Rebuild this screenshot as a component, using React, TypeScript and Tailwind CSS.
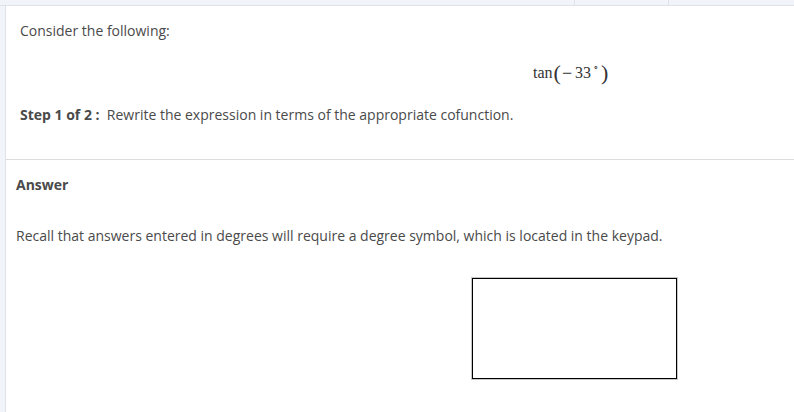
import * as React from "react";

export default function App() {
  return (
    <div className="flex h-[412px] w-[794px] flex-col overflow-hidden bg-white font-['Open_Sans',sans-serif] text-[#4a4a4a]">
      {/* top tab strip */}
      <div className="flex h-[6px] shrink-0 border-b border-[#dfe3e8] bg-[#f1f4f8]">
        <div className="w-[575px] border-r border-[#dfe3e8]" />
        <div className="w-[94px] border-r border-[#dfe3e8]" />
        <div className="flex-1" />
      </div>

      <div className="flex flex-1">
        {/* left gutter */}
        <div className="w-[6px] shrink-0 border-r border-[#dfe3e8] bg-[#f1f4f8]" />

        <div className="flex flex-1 flex-col">
          {/* question */}
          <div className="h-[154px] border-b border-[#dcdcdc] pl-[14px]">
            <p className="pt-[15px] text-[14px] leading-[20px]">Consider the following:</p>
            <div className="mt-[22px] flex h-[20px] items-center pl-[513px] font-['Liberation_Serif',serif] text-[16px] leading-[20px] text-[#333]">
              <span>tan</span>
              <span className="ml-[1px] text-[22px] font-light leading-[20px]">(</span>
              <span className="ml-[1px] text-[18px]">−</span>
              <span className="ml-[3px]">33</span>
              <span className="ml-[2px] -mt-[10px] text-[9px] leading-none">∘</span>
              <span className="ml-[2px] text-[22px] font-light leading-[20px]">)</span>
            </div>
            <p className="mt-[22px] text-[14px] leading-[20px]">
              <span className="font-bold">Step 1 of 2 :</span>&nbsp; Rewrite the expression in terms of the appropriate cofunction.
            </p>
          </div>

          {/* answer */}
          <div className="pl-[10px]">
            <p className="pt-[15px] text-[14px] font-bold leading-[20px]">Answer</p>
            <p className="mt-[31px] text-[14px] leading-[20px]">
              Recall that answers entered in degrees will require a degree symbol, which is located in the keypad.
            </p>
            <div className="ml-[455px] mt-[31px] h-[103px] w-[207px] border border-[#c8c8c8]">
              <div className="h-full w-full border border-black" />
            </div>
          </div>
        </div>
      </div>
    </div>
  );
}
